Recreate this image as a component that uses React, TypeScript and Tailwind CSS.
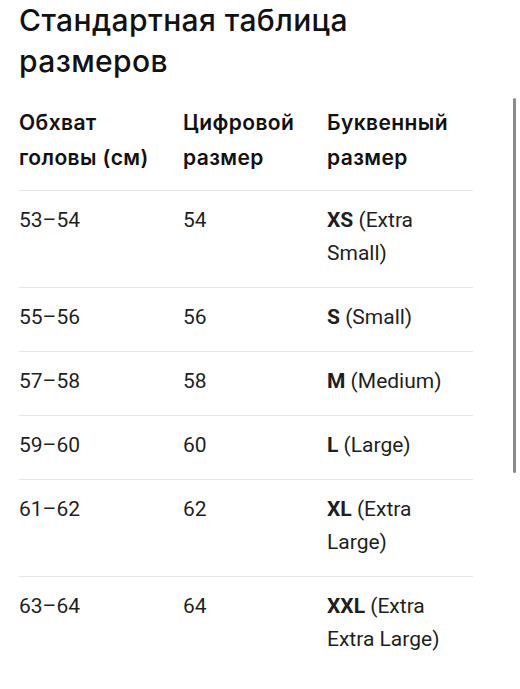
const rows = [
  { girth: "53–54", num: "54", code: "XS", label: "(Extra Small)" },
  { girth: "55–56", num: "56", code: "S", label: "(Small)" },
  { girth: "57–58", num: "58", code: "M", label: "(Medium)" },
  { girth: "59–60", num: "60", code: "L", label: "(Large)" },
  { girth: "61–62", num: "62", code: "XL", label: "(Extra Large)" },
  { girth: "63–64", num: "64", code: "XXL", label: "(Extra Extra Large)" },
];

export default function App() {
  return (
    <div className="relative h-[689px] w-[520px] overflow-hidden bg-white text-[#1f1f1f]">
      <div className="pl-[19px] pr-[47px]">
        <h1 className="pr-[60px] text-[30px] font-medium leading-[41px] tracking-[0.4px] text-[#111] [font-family:Inter,sans-serif]">
          Стандартная таблица размеров
        </h1>

        <div className="mt-[23px] grid grid-cols-[164px_144px_1fr] border-b border-[#e6e6e6] pb-[15px] text-[21px] font-semibold leading-[35px] tracking-[0.4px] text-[#111] [font-family:Inter,sans-serif]">
          <div className="pr-[16px]">Обхват головы (см)</div>
          <div className="pr-[16px]">Цифровой размер</div>
          <div className="pr-[16px]">Буквенный размер</div>
        </div>

        {rows.map((row, k) => (
          <div
            key={k}
            className={
              "grid grid-cols-[164px_144px_1fr] pt-[13px] pb-[17px] text-[21px] leading-[33px] [font-family:Roboto,sans-serif] " +
              (k < rows.length - 1 ? "border-b border-[#e6e6e6]" : "")
            }
          >
            <div>{row.girth}</div>
            <div>{row.num}</div>
            <div className="pr-[16px]">
              <span className="font-bold">{row.code}</span> {row.label}
            </div>
          </div>
        ))}
      </div>

      <div className="absolute left-[513px] top-[98px] h-[375px] w-[3px] rounded-full bg-[#8a8a8a]" />
    </div>
  );
}
